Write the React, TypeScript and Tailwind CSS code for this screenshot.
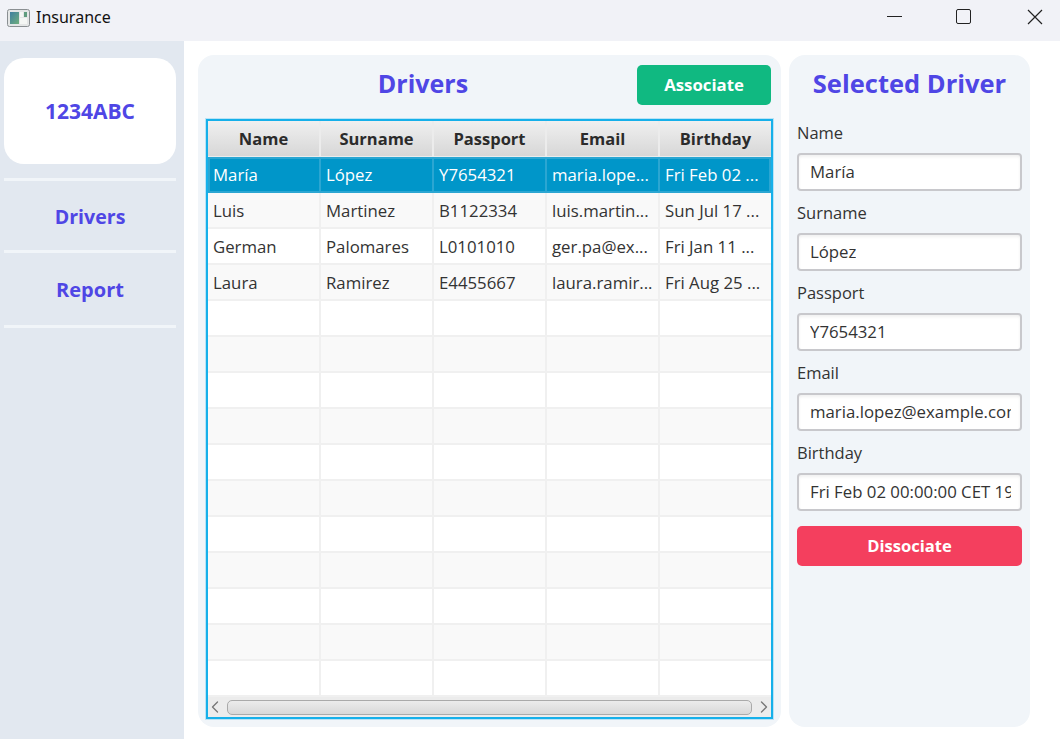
import React from "react";
import { ChevronLeft, ChevronRight } from "lucide-react";

const columns = ["Name", "Surname", "Passport", "Email", "Birthday"];

const rows = [
  ["María", "López", "Y7654321", "maria.lope...", "Fri Feb 02 ..."],
  ["Luis", "Martinez", "B1122334", "luis.martin...", "Sun Jul 17 ..."],
  ["German", "Palomares", "L0101010", "ger.pa@ex...", "Fri Jan 11 ..."],
  ["Laura", "Ramirez", "E4455667", "laura.ramir...", "Fri Aug 25 ..."],
  ...Array.from({ length: 11 }, () => ["", "", "", "", ""]),
];

const fields = [
  { label: "Name", value: "María" },
  { label: "Surname", value: "López" },
  { label: "Passport", value: "Y7654321" },
  { label: "Email", value: "maria.lopez@example.com" },
  { label: "Birthday", value: "Fri Feb 02 00:00:00 CET 1990" },
];

const App: React.FC = () => {
  return (
    <div className="flex flex-col h-[739px] w-[1060px] overflow-hidden bg-white font-['Open_Sans','Noto_Sans',sans-serif] text-[#333]">
      {/* Title bar */}
      <div className="flex items-center h-[41px] bg-[#f1f2f7] shrink-0">
        <svg width="24" height="18" viewBox="0 0 24 18" className="ml-[7px] mb-[6px]">
          <defs>
            <linearGradient id="ico" x1="0" y1="0" x2="1" y2="1">
              <stop offset="0" stopColor="#3f7fa0" />
              <stop offset="1" stopColor="#6fae7c" />
            </linearGradient>
          </defs>
          <rect x="0.5" y="0.5" width="22" height="17" rx="2" fill="#e4e6e6" stroke="#8a8f92" />
          <rect x="3" y="3" width="9" height="12" fill="url(#ico)" />
          <rect x="13" y="3" width="3" height="5" fill="#f4f6f4" />
          <rect x="17" y="3" width="3" height="5" fill="#5f9c7e" />
          <rect x="13" y="9" width="7" height="6" fill="#f4f6f4" />
        </svg>
        <span className="ml-[5px] mb-[7px] text-[16px] leading-5 text-[#111] font-['Noto_Sans',sans-serif]">Insurance</span>
        <div className="ml-auto flex items-center mb-[8px]">
          <div className="w-[15px] h-px bg-[#222] mr-[54px]" />
          <div className="w-[15px] h-[15px] rounded-[2px] border-[1.5px] border-[#222] mr-[56px]" />
          <svg width="16" height="16" viewBox="0 0 16 16" className="mr-[17px]" stroke="#222" strokeWidth="1.2">
            <path d="M1 1 15 15M15 1 1 15" />
          </svg>
        </div>
      </div>

      <div className="flex flex-1 min-h-0">
        {/* Sidebar */}
        <aside className="flex flex-col w-[184px] shrink-0 bg-[#e2e8f0] pl-1 pr-2 pt-[17px]">
          <div className="flex items-center justify-center h-[106px] pt-[2px] rounded-[20px] bg-white text-[21px] font-bold text-[#4f46e5]">
            1234ABC
          </div>
          <div className="h-[3px] mt-[14px] bg-[#f1f5f9]" />
          <div className="flex items-center justify-center h-[69px] pt-[2px] text-[19.6px] font-bold text-[#4f46e5]">Drivers</div>
          <div className="h-[3px] bg-[#f1f5f9]" />
          <div className="flex items-center justify-center h-[72px] pt-[2px] text-[20px] font-bold text-[#4f46e5]">Report</div>
          <div className="h-[3px] bg-[#f1f5f9]" />
        </aside>

        {/* Drivers panel */}
        <main className="flex flex-col w-[583px] h-[672px] mt-[14px] ml-[14px] rounded-2xl bg-[#f1f5f9] px-2">
          <div className="flex items-start h-[64px] shrink-0 pr-[2px]">
            <h1 className="flex-1 text-center pl-[3px] text-[25px] leading-[56px] font-bold text-[#4f46e5]">Drivers</h1>
            <button className="mt-[10px] w-[134px] h-10 rounded-[5px] bg-[#10b981] text-[16.8px] font-bold text-white">
              Associate
            </button>
          </div>

          {/* Table */}
          <div className="flex flex-col w-[567px] h-[600px] border-2 border-[#16b0ea] bg-white overflow-hidden shadow-[0_0_0_1px_rgba(22,176,234,0.25)]">
            <div className="grid grid-cols-[113px_113px_113px_113px_111px] h-9 shrink-0 bg-gradient-to-b from-[#f0f0f0] to-[#d6d6d6]">
              {columns.map((col) => (
                <div key={col} className="flex items-center justify-center pt-[2px] border-r-2 border-b border-[#ececec] last:border-r-0 text-[16.5px] font-bold text-[#2b2b2b]">
                  {col}
                </div>
              ))}
            </div>
            {rows.map((row, i) => (
              <div
                key={i}
                className={
                  i === 0
                    ? "grid grid-cols-[113px_113px_113px_113px_111px] h-9 shrink-0 bg-[#0096c9] text-white shadow-[inset_0_0_0_2px_#2ba6d2]"
                    : i % 2 === 1
                      ? "grid grid-cols-[113px_113px_113px_113px_111px] h-9 shrink-0 bg-[#f9f9f9]"
                      : "grid grid-cols-[113px_113px_113px_113px_111px] h-9 shrink-0 bg-white"
                }
              >
                {row.map((cell, j) => (
                  <div
                    key={j}
                    className={
                      i === 0
                        ? "flex items-center pl-[5px] text-[16.8px] whitespace-nowrap overflow-hidden border-r-2 border-[#2ba6d2] last:border-r-0"
                        : "flex items-center pl-[5px] pt-[2px] text-[16.8px] whitespace-nowrap overflow-hidden border-r-2 border-b-2 border-[#f0f0f0] last:border-r-0"
                    }
                  >
                    {cell}
                  </div>
                ))}
              </div>
            ))}
            {/* Scrollbar */}
            <div className="flex items-center h-5 shrink-0 bg-[#ececec] text-[#777]">
              <div className="flex items-center justify-center w-[19px] pr-[5px] shrink-0">
                <ChevronLeft size={20} strokeWidth={1.6} className="shrink-0" />
              </div>
              <div className="flex-1 h-[15px] rounded-[5px] border border-[#aaa] bg-gradient-to-b from-[#ececec] to-[#d8d8d8]" />
              <div className="flex items-center justify-center w-[19px] pl-[5px] shrink-0">
                <ChevronRight size={20} strokeWidth={1.6} className="shrink-0" />
              </div>
            </div>
          </div>
        </main>

        {/* Selected driver panel */}
        <section className="flex flex-col w-[241px] h-[672px] mt-[14px] ml-2 rounded-2xl bg-[#f1f5f9] px-2">
          <h2 className="h-[56px] mb-[10px] flex items-center justify-center text-[25.5px] font-bold text-[#4f46e5] whitespace-nowrap shrink-0">
            Selected Driver
          </h2>
          {fields.map((field) => (
            <div key={field.label} className="flex flex-col h-[80px] shrink-0">
              <label className="h-[24px] leading-[24px] text-[16.5px] mb-2">{field.label}</label>
              <div className="flex items-center w-[225px] h-[38px] rounded-[4px] border-2 border-[#c8c8cc] bg-white pl-[11px] pr-[9px] shadow-[inset_0_2px_3px_rgba(0,0,0,0.06)]">
                <span className="block overflow-hidden whitespace-nowrap text-[16.8px] text-[#333]">{field.value}</span>
              </div>
            </div>
          ))}
          <button className="w-[225px] h-10 mt-[5px] rounded-[5px] bg-[#f43f5e] text-[16.6px] font-bold text-white">
            Dissociate
          </button>
        </section>
      </div>
    </div>
  );
};

export default App;
